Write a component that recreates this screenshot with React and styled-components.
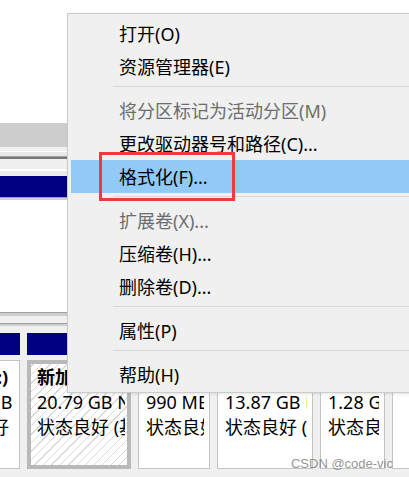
import styled, { createGlobalStyle } from "styled-components";

const GlobalStyle = createGlobalStyle`
  html, body {
    margin: 0;
    padding: 0;
    background: #fff;
  }
  body {
    width: 409px;
    height: 477px;
    overflow: hidden;
    font-family: "Noto Sans", "Noto Sans CJK SC", sans-serif;
  }
`;

const Screen = styled.div`
  position: relative;
  width: 409px;
  height: 477px;
  overflow: hidden;
  background: #fff;
`;

// --- disk management window behind the menu ---

const Window = styled.div`
  display: flex;
  flex-direction: column;
  height: 477px;
  background: #f0f0f0;
`;

const VolumeList = styled.div`
  height: 123px;
  flex-shrink: 0;
  background: #fff;
`;

const ColumnHeader = styled.div`
  height: 24px;
  flex-shrink: 0;
  background: #cdcdcd;
`;

const Rule = styled.div`
  height: ${(p) => p.$h}px;
  flex-shrink: 0;
  background: ${(p) => p.$c};
`;

const SelectedRow = styled.div`
  height: 21px;
  flex-shrink: 0;
  background: #000080;
`;

const DiskList = styled.div`
  height: 112px;
  flex-shrink: 0;
  background: #fff;
`;

const DiskRow = styled.div`
  flex: 1;
  display: flex;
  gap: 7px;
  margin-left: -71px;
  background: #f0f0f0;
`;

const Partition = styled.div`
  width: ${(p) => p.$w}px;
  flex-shrink: 0;
  display: flex;
  flex-direction: column;
  gap: 5px;
`;

const PartHeader = styled.div`
  height: 22px;
  background: #000080;
`;

const PartBody = styled.div`
  height: 109px;
  box-sizing: border-box;
  border: ${(p) => (p.$selected ? "4px solid #b9b9b9" : "1px solid #c4c4c4")};
  background: ${(p) =>
    p.$selected
      ? "repeating-linear-gradient(-45deg, #ffffff 0 5px, #d9d9d9 5px 6px)"
      : "#ffffff"};
  padding: ${(p) => (p.$selected ? "1px 2px 0 6px" : "4px 5px 0 7px")};
`;

const PartLine = styled.div`
  font-size: 18px;
  line-height: 25px;
  font-weight: ${(p) => (p.$bold ? 700 : 400)};
  color: #000;
  white-space: nowrap;
  overflow: hidden;
`;

// --- context menu ---

const Menu = styled.div`
  position: absolute;
  left: 67px;
  top: 13px;
  width: 345px;
  box-sizing: border-box;
  padding: 3px 2px 1px 3px;
  background: #f0f0f0;
  border: 1px solid #cccccc;
  box-shadow: 1px 1px 3px rgba(0, 0, 0, 0.12);
`;

const MenuItem = styled.div`
  height: 33px;
  display: flex;
  align-items: center;
  padding-left: 48px;
  font-size: 18px;
  line-height: 1;
  white-space: nowrap;
  color: ${(p) => (p.$disabled ? "#6d6d6d" : "#000")};
  background: ${(p) => (p.$active ? "#91c9f7" : "transparent")};
`;

const Separator = styled.div`
  height: 1px;
  margin: 3px 0 7px 42px;
  background: #d7d7d7;
`;

const Highlight = styled.div`
  position: absolute;
  left: 99px;
  top: 152px;
  width: 136px;
  height: 49px;
  box-sizing: border-box;
  border: 3px solid #ef3b3b;
`;

const Watermark = styled.div`
  position: absolute;
  right: 16px;
  bottom: 6px;
  font-family: "Liberation Sans", Arial, sans-serif;
  font-size: 13px;
  color: rgba(120, 120, 120, 0.8);
  white-space: nowrap;
`;

const partitions = [
  { w: 91, lines: ["软件 (D:)", "58.59 GB NTFS", "状态良好 (基本数据分区)"] },
  { w: 104, selected: true, lines: ["新加卷 (E:)", "20.79 GB NTFS", "状态良好 (基本数据分区)"] },
  { w: 72, lines: ["(F:)", "990 MB NTFS", "状态良好 (基本数据分区)"] },
  { w: 96, lines: ["新加卷 (G:)", "13.87 GB NTFS", "状态良好 (基本数据分区)"] },
  { w: 65, lines: ["(H:)", "1.28 GB NTFS", "状态良好 (恢复分区)"] },
  { w: 100, lines: ["", "", ""] },
];

const menu = [
  { label: "打开(O)" },
  { label: "资源管理器(E)" },
  "sep",
  { label: "将分区标记为活动分区(M)", disabled: true },
  { label: "更改驱动器号和路径(C)..." },
  { label: "格式化(F)...", active: true },
  "sep",
  { label: "扩展卷(X)...", disabled: true },
  { label: "压缩卷(H)..." },
  { label: "删除卷(D)..." },
  "sep",
  { label: "属性(P)" },
  "sep",
  { label: "帮助(H)" },
];

export default function App() {
  return (
    <Screen>
      <GlobalStyle />
      <Window>
        <VolumeList />
        <ColumnHeader />
        <Rule $h={4} $c="#f0f0f0" />
        <Rule $h={1} $c="#ffffff" />
        <Rule $h={4} $c="#e9e9e9" />
        <Rule $h={1} $c="#a0a0a0" />
        <Rule $h={2} $c="#7a7a7a" />
        <Rule $h={10} $c="#f0f0f0" />
        <Rule $h={2} $c="#ffffff" />
        <Rule $h={5} $c="#ececec" />
        <SelectedRow />
        <Rule $h={1} $c="#a0a0a0" />
        <Rule $h={2} $c="#d0d0d0" />
        <DiskList />
        <Rule $h={1} $c="#a0a0a0" />
        <Rule $h={3} $c="#cfcfcf" />
        <Rule $h={7} $c="#f0f0f0" />
        <Rule $h={1} $c="#a0a0a0" />
        <Rule $h={2} $c="#cfcfcf" />
        <Rule $h={7} $c="#f0f0f0" />
        <DiskRow>
          {partitions.map((part, i) => (
            <Partition key={i} $w={part.w}>
              <PartHeader />
              <PartBody $selected={part.selected}>
                {part.lines.map((text, j) => (
                  <PartLine key={j} $bold={j === 0}>
                    {text}
                  </PartLine>
                ))}
              </PartBody>
            </Partition>
          ))}
        </DiskRow>
      </Window>

      <Menu>
        {menu.map((item, i) =>
          item === "sep" ? (
            <Separator key={i} />
          ) : (
            <MenuItem key={i} $disabled={item.disabled} $active={item.active}>
              {item.label}
            </MenuItem>
          )
        )}
      </Menu>

      <Highlight />
      <Watermark>CSDN @code-vic</Watermark>
    </Screen>
  );
}
